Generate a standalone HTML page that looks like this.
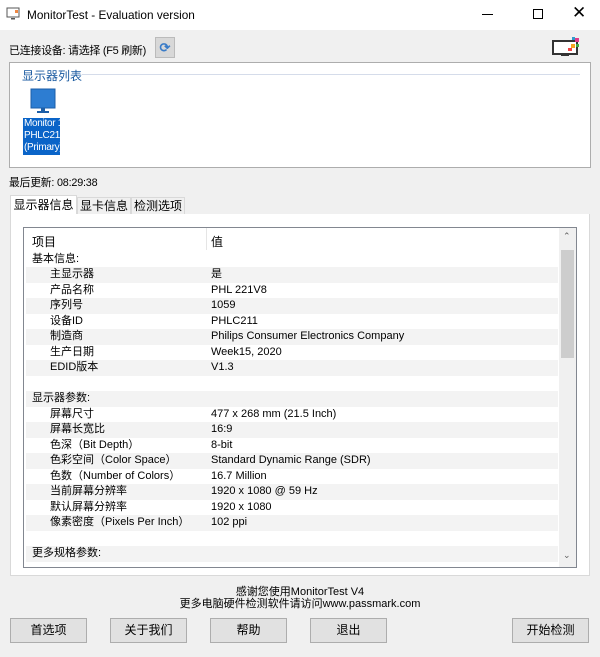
<!DOCTYPE html>
<html><head><meta charset="utf-8"><style>
*{box-sizing:border-box;margin:0;padding:0}
body{width:600px;height:657px;background:#f0f0f0;font-family:"Liberation Sans","Noto Sans CJK SC",sans-serif;font-size:12px;color:#000;position:relative;overflow:hidden}
.a{position:absolute}
.btn{position:absolute;top:618px;width:77px;height:25px;background:#e1e1e1;border:1px solid #adadad;text-align:center;line-height:23px;font-size:12px}
.row{position:absolute;left:26px;width:532px;height:15.5px;line-height:15.5px;font-size:11px}
.row.g{background:#f3f3f3}
.row .k{position:absolute;left:6px}
.row .k.i{left:24px}
.row .v{position:absolute;left:185px}
</style></head><body>
<div class="a" style="left:0;top:0;width:600px;height:30px;background:#fff"></div>
<svg class="a" style="left:6px;top:7px" width="16" height="14"><rect x="1" y="1" width="12" height="9" fill="none" stroke="#555"/><rect x="5" y="11" width="4" height="1.5" fill="#555"/><rect x="9" y="3" width="3" height="3" fill="#e84"/></svg>
<div class="a" style="left:27px;top:8px;font-size:11.8px">MonitorTest - Evaluation version</div>
<div class="a" style="left:482px;top:14px;width:11px;height:1px;background:#000"></div>
<div class="a" style="left:533px;top:9px;width:10px;height:10px;border:1px solid #000"></div>
<div class="a" style="left:572px;top:3px;font-size:17px;font-weight:300">✕</div>

<div class="a" style="left:9px;top:42px;font-size:11px;white-space:nowrap;letter-spacing:-0.3px">已连接设备: 请选择 (F5 刷新)</div>
<div class="a" style="left:155px;top:37px;width:20px;height:21px;background:#d8d8d8;border:1px solid #bbb;color:#3a7cc8;text-align:center;line-height:19px;font-size:13px;font-weight:bold">⟳</div>
<svg class="a" style="left:551px;top:35px" width="32" height="22"><rect x="2" y="6" width="24" height="13" fill="#fff" stroke="#333" stroke-width="2"/><rect x="10" y="19" width="8" height="2" fill="#333"/><rect x="20" y="9" width="4" height="4" fill="#f5a623"/><rect x="24" y="3" width="4" height="4" fill="#e03c8a"/><rect x="17" y="13" width="4" height="3" fill="#e44"/><rect x="25" y="9" width="3" height="3" fill="#4a4"/><rect x="21" y="2" width="3" height="3" fill="#39c"/></svg>

<div class="a" style="left:9px;top:62px;width:582px;height:106px;background:#fff;border:1px solid #adadad"></div>
<div class="a" style="left:22px;top:67px;color:#1a5aa0;font-size:12px">显示器列表</div>
<div class="a" style="left:82px;top:74px;width:498px;height:1px;background:#d5dcea"></div>
<svg class="a" style="left:30px;top:88px" width="28" height="27"><rect x="1" y="1" width="24" height="19" fill="#2d7dd2" stroke="#1c5ea8"/><rect x="11" y="20" width="4" height="3" fill="#1c5ea8"/><rect x="7" y="23" width="12" height="2" fill="#1c5ea8"/></svg>
<div class="a" style="left:23px;top:118px;width:37px;height:37px;background:#0a64c8;color:#fff;font-size:10px;line-height:12px;white-space:nowrap;padding-left:1px;letter-spacing:-0.3px;overflow:hidden">Monitor 1<br>PHLC211<br>(Primary)</div>

<div class="a" style="left:9px;top:174px;font-size:10.8px;letter-spacing:-0.2px">最后更新: 08:29:38</div>

<div class="a" style="left:10px;top:195px;width:67px;height:20px;background:#fff;border:1px solid #d9d9d9;border-bottom:none;text-align:center;line-height:19px">显示器信息</div>
<div class="a" style="left:77px;top:197px;width:54px;height:18px;border:1px solid #d9d9d9;text-align:center;line-height:17px">显卡信息</div>
<div class="a" style="left:131px;top:197px;width:54px;height:18px;border:1px solid #d9d9d9;text-align:center;line-height:17px">检测选项</div>
<div class="a" style="left:10px;top:214px;width:580px;height:362px;background:#fff;border:1px solid #d9d9d9;border-top:none"></div>

<div class="a" style="left:23px;top:227px;width:554px;height:341px;background:#fff;border:1px solid #828790;overflow:hidden">
<div class="a" style="left:0;top:0;width:534px;height:21px;background:#fff"></div>
<div class="a" style="left:8px;top:5px;font-size:12px">项目</div>
<div class="a" style="left:182px;top:0;width:1px;height:22px;background:#e5e5e5"></div>
<div class="a" style="left:187px;top:5px;font-size:12px">值</div>
<div class="a" style="left:535px;top:0;width:17px;height:339px;background:#f0f0f0"></div>
<div class="a" style="left:537px;top:22px;width:13px;height:108px;background:#cdcdcd"></div>
<div class="a" style="left:539px;top:3px;font-size:9px;color:#606060">⌃</div>
<div class="a" style="left:539px;top:322px;font-size:9px;color:#606060">⌄</div>
</div>

<div class="a" style="left:0;top:0">
<div class="row" style="top:251.5px"><span class="k">基本信息:</span></div>
<div class="row g" style="top:267px"><span class="k i">主显示器</span><span class="v">是</span></div>
<div class="row" style="top:282.5px"><span class="k i">产品名称</span><span class="v">PHL 221V8</span></div>
<div class="row g" style="top:298px"><span class="k i">序列号</span><span class="v">1059</span></div>
<div class="row" style="top:313.5px"><span class="k i">设备ID</span><span class="v">PHLC211</span></div>
<div class="row g" style="top:329px"><span class="k i">制造商</span><span class="v">Philips Consumer Electronics Company</span></div>
<div class="row" style="top:344.5px"><span class="k i">生产日期</span><span class="v">Week15, 2020</span></div>
<div class="row g" style="top:360px"><span class="k i">EDID版本</span><span class="v">V1.3</span></div>
<div class="row" style="top:375.5px"></div>
<div class="row g" style="top:391px"><span class="k">显示器参数:</span></div>
<div class="row" style="top:406.5px"><span class="k i">屏幕尺寸</span><span class="v">477 x 268 mm (21.5 Inch)</span></div>
<div class="row g" style="top:422px"><span class="k i">屏幕长宽比</span><span class="v">16:9</span></div>
<div class="row" style="top:437.5px"><span class="k i">色深（Bit Depth）</span><span class="v">8-bit</span></div>
<div class="row g" style="top:453px"><span class="k i">色彩空间（Color Space）</span><span class="v">Standard Dynamic Range (SDR)</span></div>
<div class="row" style="top:468.5px"><span class="k i">色数（Number of Colors）</span><span class="v">16.7 Million</span></div>
<div class="row g" style="top:484px"><span class="k i">当前屏幕分辨率</span><span class="v">1920 x 1080 @ 59 Hz</span></div>
<div class="row" style="top:499.5px"><span class="k i">默认屏幕分辨率</span><span class="v">1920 x 1080</span></div>
<div class="row g" style="top:515px"><span class="k i">像素密度（Pixels Per Inch）</span><span class="v">102 ppi</span></div>
<div class="row" style="top:530.5px"></div>
<div class="row g" style="top:546px"><span class="k">更多规格参数:</span></div>
</div>

<div class="a" style="left:0;top:586px;width:600px;text-align:center;font-size:11px;line-height:12px">感谢您使用MonitorTest V4<br>更多电脑硬件检测软件请访问www.passmark.com</div>

<div class="btn" style="left:10px">首选项</div>
<div class="btn" style="left:110px">关于我们</div>
<div class="btn" style="left:210px">帮助</div>
<div class="btn" style="left:310px">退出</div>
<div class="btn" style="left:512px">开始检测</div>
</body></html>
